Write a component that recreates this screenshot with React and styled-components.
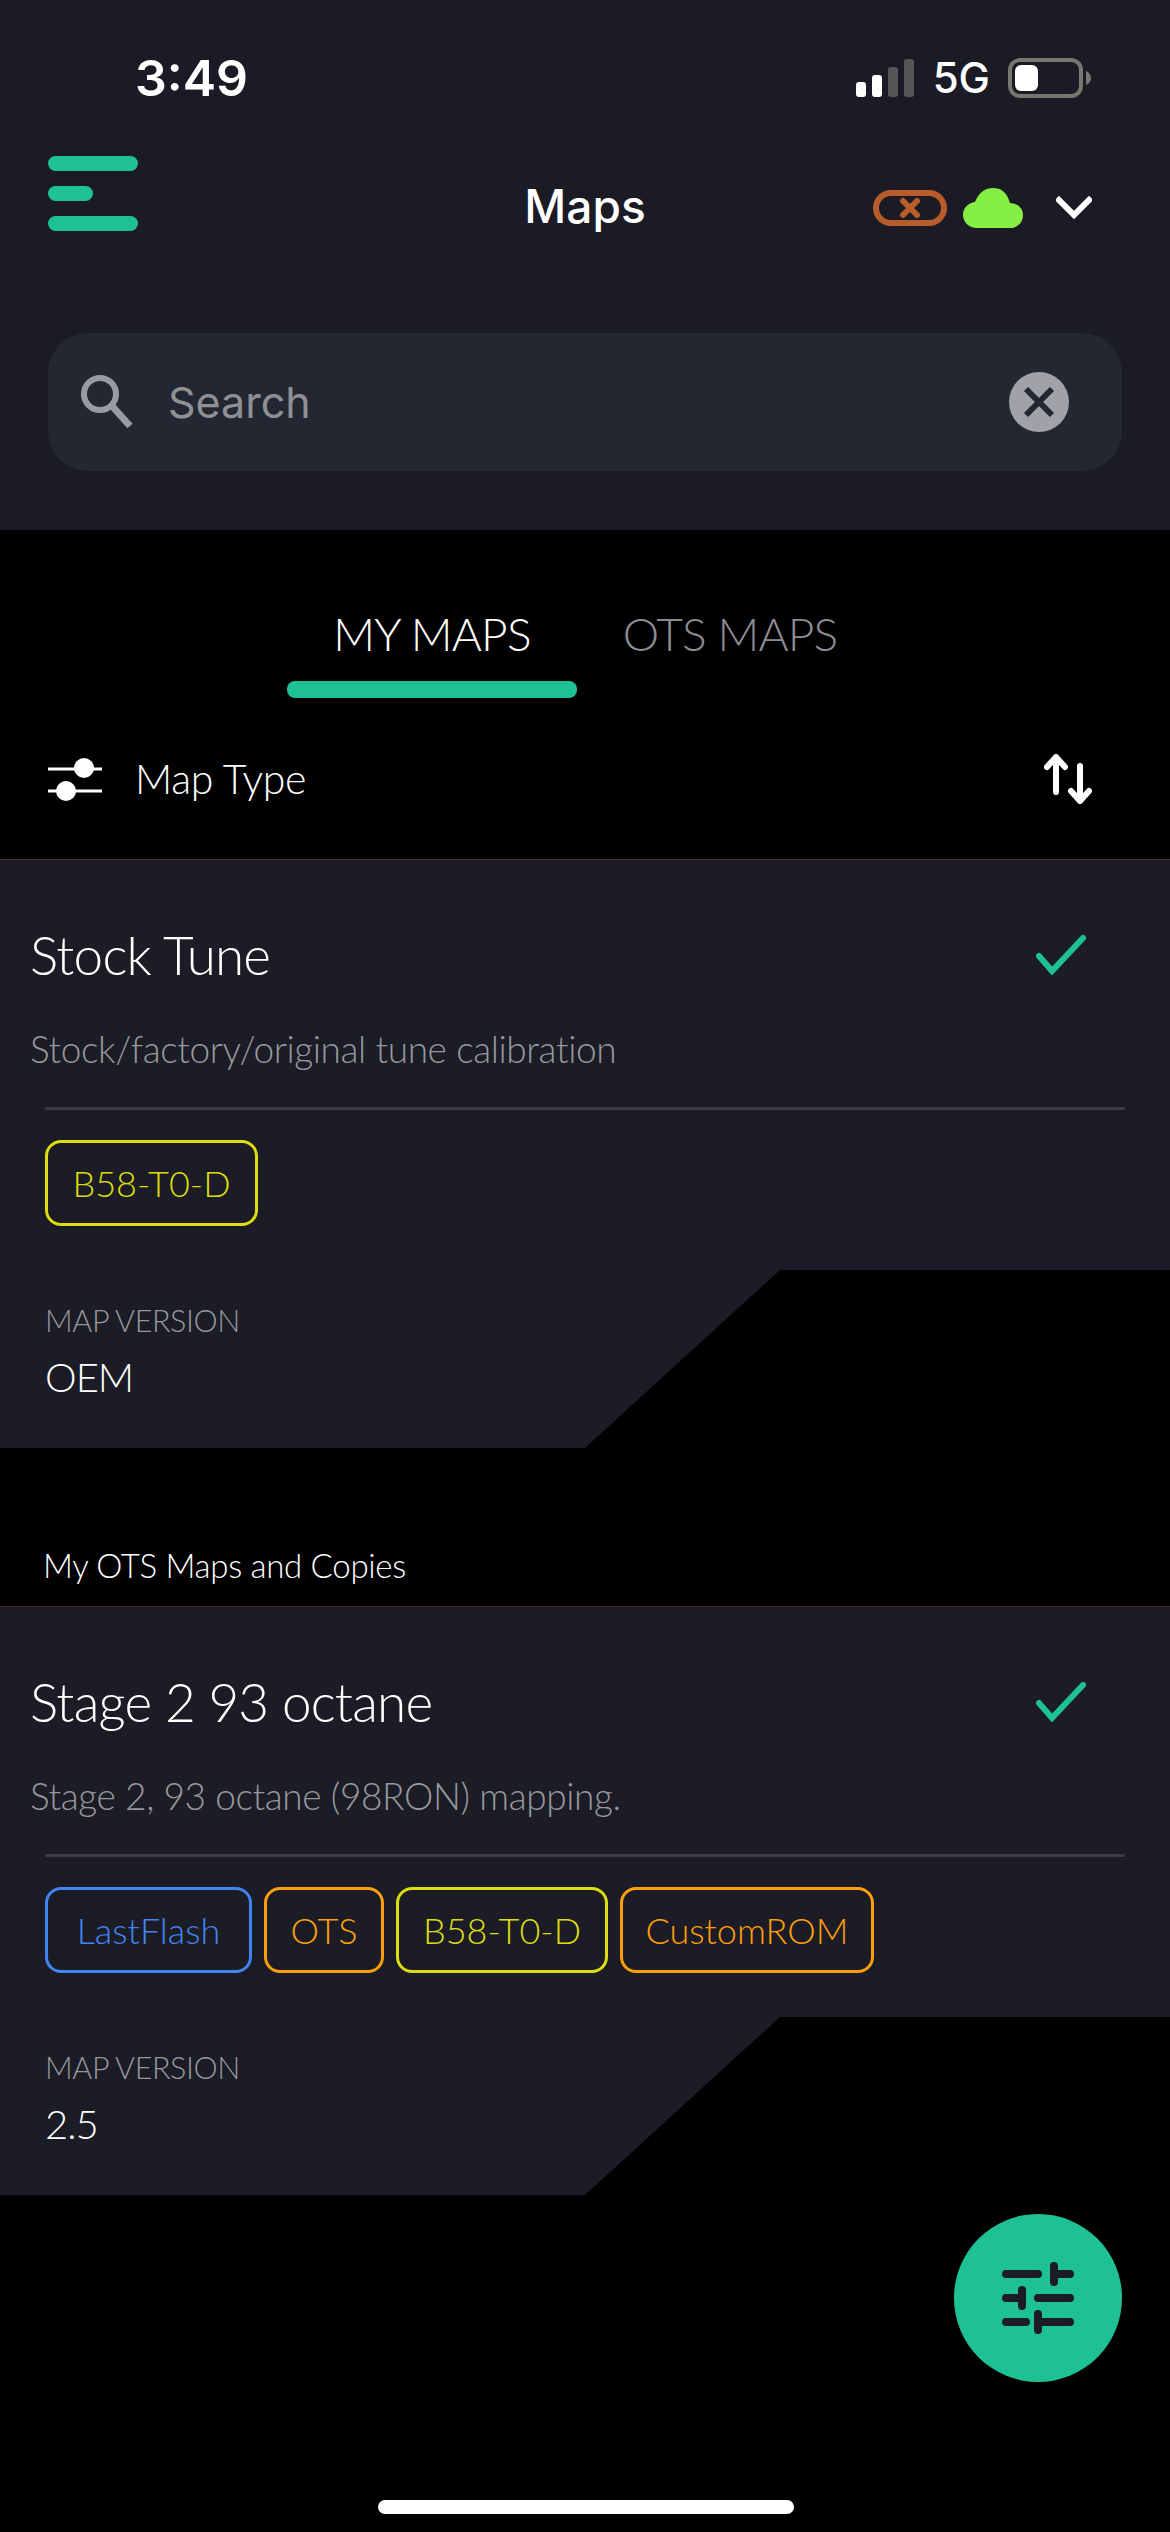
import React from 'react';
import styled, { createGlobalStyle } from 'styled-components';

const GlobalStyle = createGlobalStyle`
  html, body {
    margin: 0;
    padding: 0;
    background: #000;
  }
  body {
    font-family: "Lato", "Liberation Sans", sans-serif;
  }
`;

const Screen = styled.div`
  position: relative;
  width: 1170px;
  height: 2532px;
  overflow: hidden;
  background: #000;
`;

const Header = styled.header`
  height: 530px;
  background: #1a1b25;
  display: flex;
  flex-direction: column;
`;

const StatusBar = styled.div`
  height: 110px;
  padding: 46px 79px 0 135px;
  box-sizing: border-box;
  display: flex;
  align-items: center;
  justify-content: space-between;
  color: #fff;
  font-family: "Inter", "Liberation Sans", sans-serif;
`;
const Time = styled.span`
  font-size: 50px;
  font-weight: 600;
  line-height: 60px;
`;
const StatusIcons = styled.div`
  display: flex;
  align-items: center;
`;
const Network = styled.span`
  font-size: 42px;
  font-weight: 500;
  line-height: 50px;
  margin: 0 18px 0 19px;
`;

const NavBar = styled.div`
  display: grid;
  grid-template-columns: 1fr auto 1fr;
  align-items: start;
  height: 223px;
  padding: 46px 48px 0;
  box-sizing: border-box;
`;
const Menu = styled.div`
  display: flex;
  flex-direction: column;
  gap: 15px;
`;
const MenuBar = styled.span`
  display: block;
  width: ${(p) => p.$w}px;
  height: 15px;
  border-radius: 8px;
  background: #1ec193;
`;
const Title = styled.h1`
  margin: 22px 0 0;
  font-family: "Inter", "Liberation Sans", sans-serif;
  font-size: 46px;
  font-weight: 500;
  line-height: 56px;
  color: #fff;
`;
const NavIcons = styled.div`
  display: flex;
  justify-content: flex-end;
  align-items: center;
  gap: 16px;
  margin-top: 32px;
  padding-right: 30px;
`;
const ChevronSlot = styled.span`
  display: flex;
  margin-left: 17px;
`;

const SearchBox = styled.div`
  height: 138px;
  margin: 0 48px;
  padding: 0 53px 0 33px;
  box-sizing: border-box;
  border-radius: 40px;
  background: #232731;
  display: flex;
  align-items: center;
`;
const SearchText = styled.span`
  flex: 1;
  margin-left: 35px;
  font-family: "Inter", "Liberation Sans", sans-serif;
  font-size: 43px;
  line-height: 54px;
  color: #8f9096;
`;

const Tabs = styled.nav`
  height: 168px;
  padding-left: 287px;
  display: flex;
  gap: 8px;
`;
const Tab = styled.div`
  width: 290px;
  height: 168px;
  box-sizing: border-box;
  padding-top: 79px;
  text-align: center;
  font-size: 46px;
  font-weight: 300;
  line-height: 50px;
  letter-spacing: -0.8px;
  color: ${(p) => (p.$active ? '#fff' : '#8c8d92')};
  position: relative;
  &::after {
    content: '';
    display: ${(p) => (p.$active ? 'block' : 'none')};
    position: absolute;
    left: 0;
    right: 0;
    bottom: 0;
    height: 17px;
    border-radius: 8px;
    background: #1ec193;
  }
`;

const FilterRow = styled.div`
  height: 161px;
  padding: 0 78px 0 48px;
  box-sizing: border-box;
  display: flex;
  align-items: center;
`;
const FilterLabel = styled.span`
  flex: 1;
  margin-left: 33px;
  font-size: 41px;
  font-weight: 300;
  line-height: 50px;
  letter-spacing: -0.3px;
  color: #fff;
`;

const Card = styled.section`
  background: #1b1c25;
  border-top: 1px solid #4a2c2e;
  padding: 67px 0 46px;
  clip-path: polygon(0 0, 100% 0, 100% 411px, 780px 411px, 585px 100%, 0 100%);
`;
const CardHead = styled.div`
  display: flex;
  align-items: center;
  justify-content: space-between;
  padding: 0 84px 0 30px;
`;
const CardTitle = styled.h2`
  margin: 0;
  font-size: 53px;
  font-weight: 300;
  line-height: 56px;
  letter-spacing: -0.8px;
  color: #fff;
`;
const Description = styled.p`
  margin: 44px 0 0 30px;
  font-size: 37px;
  font-weight: 300;
  line-height: 44px;
  letter-spacing: -0.4px;
  color: #97989d;
`;
const Divider = styled.hr`
  margin: 36px 45px 0;
  height: 3px;
  border: 0;
  border-radius: 2px;
  background: #3b3c43;
`;
const Chips = styled.div`
  display: flex;
  gap: 12px;
  margin: 30px 0 0 45px;
`;
const Chip = styled.span`
  width: ${(p) => p.$w}px;
  height: 86px;
  box-sizing: border-box;
  border: 3px solid ${(p) => p.$color};
  border-radius: 16px;
  display: flex;
  align-items: center;
  justify-content: center;
  font-size: 36px;
  font-weight: 300;
  letter-spacing: 0;
  color: ${(p) => p.$color};
`;
const VersionLabel = styled.div`
  margin: 76px 0 0 45px;
  font-size: 30.5px;
  font-weight: 300;
  line-height: 36px;
  letter-spacing: -0.4px;
  color: #97989d;
`;
const VersionValue = styled.div`
  margin: 14px 0 0 45px;
  font-size: 40px;
  font-weight: 300;
  line-height: 50px;
  letter-spacing: -1px;
  color: #fff;
`;

const SectionLabel = styled.div`
  height: 158px;
  padding: 0 0 19px 43px;
  box-sizing: border-box;
  display: flex;
  align-items: flex-end;
  font-size: 33px;
  font-weight: 300;
  line-height: 44px;
  letter-spacing: -0.3px;
  color: #fff;
`;

const Fab = styled.button`
  position: absolute;
  left: 954px;
  top: 2214px;
  width: 168px;
  height: 168px;
  padding: 0;
  border: 0;
  border-radius: 50%;
  background: #1ec193;
  display: flex;
  align-items: center;
  justify-content: center;
`;
const HomeIndicator = styled.div`
  position: absolute;
  left: 378px;
  top: 2500px;
  width: 416px;
  height: 14px;
  border-radius: 7px;
  background: #fff;
`;

const Signal = () => (
  <svg width="58" height="38" viewBox="0 0 58 38">
    <rect x="0" y="23" width="10" height="15" rx="3" fill="#fff" />
    <rect x="16" y="16" width="10" height="22" rx="3" fill="#fff" />
    <rect x="32" y="8" width="10" height="30" rx="3" fill="#555655" />
    <rect x="48" y="0" width="10" height="38" rx="3" fill="#555655" />
  </svg>
);

const Battery = () => (
  <svg width="83" height="40" viewBox="0 0 83 40">
    <rect x="2" y="2" width="71" height="36" rx="10" fill="none" stroke="#77766f" strokeWidth="4" />
    <rect x="7" y="7" width="23" height="26" rx="6" fill="#fff" />
    <path d="M78 13c3 1 5 4 5 7s-2 6-5 7z" fill="#77766f" />
  </svg>
);

const Disconnected = () => (
  <svg width="74" height="36" viewBox="0 0 74 36">
    <rect x="3" y="3" width="68" height="30" rx="15" fill="none" stroke="#b85c2b" strokeWidth="6" />
    <path d="M30 11l14 14M44 11L30 25" fill="none" stroke="#b85c2b" strokeWidth="6" strokeLinecap="round" />
  </svg>
);

const Cloud = () => (
  <svg width="60" height="40" viewBox="0 0 60 40">
    <path
      d="M14 40C6 40 0 34 0 27c0-7 5-12 12-13C15 6 21 0 30 0c8 0 14 4 17 15 7 0 13 5 13 12 0 8-6 13-13 13z"
      fill="#86ef43"
    />
  </svg>
);

const Chevron = () => (
  <svg width="36" height="24" viewBox="0 0 36 24">
    <path d="M3 4l15 15L33 4" fill="none" stroke="#fff" strokeWidth="6" strokeLinecap="square" />
  </svg>
);

const SearchIcon = () => (
  <svg width="52" height="54" viewBox="0 0 52 54">
    <circle cx="19" cy="19" r="16" fill="none" stroke="#9a9ba0" strokeWidth="6" />
    <path d="M31 31l18 20" fill="none" stroke="#9a9ba0" strokeWidth="7" />
  </svg>
);

const ClearIcon = () => (
  <svg width="60" height="60" viewBox="0 0 60 60">
    <circle cx="30" cy="30" r="30" fill="#a1a2a8" />
    <path d="M17 17l26 26M43 17L17 43" fill="none" stroke="#232731" strokeWidth="6" />
  </svg>
);

const FilterIcon = () => (
  <svg width="54" height="46" viewBox="0 0 54 46">
    <path d="M0 13h54M0 35h54" stroke="#fff" strokeWidth="3" />
    <circle cx="36" cy="12" r="10" fill="#fff" />
    <circle cx="18" cy="35" r="10" fill="#fff" />
  </svg>
);

const SortIcon = () => (
  <svg width="48" height="50" viewBox="0 0 48 50">
    <path
      d="M12 38V4M3 13l9-10 9 10M36 12v35M27 37l9 10 9-10"
      fill="none"
      stroke="#fff"
      strokeWidth="6"
      strokeLinecap="round"
      strokeLinejoin="round"
    />
  </svg>
);

const CheckIcon = () => (
  <svg width="50" height="40" viewBox="0 0 50 40">
    <path d="M3 21l13 15L47 3" fill="none" stroke="#1ec193" strokeWidth="6" strokeLinecap="round" />
  </svg>
);

const SlidersIcon = () => (
  <svg width="72" height="72" viewBox="0 0 72 72">
    <path
      d="M4 12h32M52 4v16M52 12h16M4 36h16M20 28v16M36 36h32M4 60h20M36 52v16M36 60h32"
      fill="none"
      stroke="#1a1b25"
      strokeWidth="8"
      strokeLinecap="round"
    />
  </svg>
);

const YELLOW = '#dddd10';
const ORANGE = '#ff9f0a';
const BLUE = '#4285f0';

const maps = [
  {
    title: 'Stock Tune',
    description: 'Stock/factory/original tune calibration',
    chips: [{ label: 'B58-T0-D', color: YELLOW, width: 213 }],
    version: 'OEM',
  },
  {
    title: 'Stage 2 93 octane',
    description: 'Stage 2, 93 octane (98RON) mapping.',
    chips: [
      { label: 'LastFlash', color: BLUE, width: 207 },
      { label: 'OTS', color: ORANGE, width: 120 },
      { label: 'B58-T0-D', color: YELLOW, width: 212 },
      { label: 'CustomROM', color: ORANGE, width: 254 },
    ],
    version: '2.5',
  },
];

const MapCard = ({ map }) => (
  <Card>
    <CardHead>
      <CardTitle>{map.title}</CardTitle>
      <CheckIcon />
    </CardHead>
    <Description>{map.description}</Description>
    <Divider />
    <Chips>
      {map.chips.map((chip) => (
        <Chip key={chip.label} $color={chip.color} $w={chip.width}>
          {chip.label}
        </Chip>
      ))}
    </Chips>
    <VersionLabel>MAP VERSION</VersionLabel>
    <VersionValue>{map.version}</VersionValue>
  </Card>
);

export default function App() {
  return (
    <Screen>
      <GlobalStyle />
      <Header>
        <StatusBar>
          <Time>3:49</Time>
          <StatusIcons>
            <Signal />
            <Network>5G</Network>
            <Battery />
          </StatusIcons>
        </StatusBar>
        <NavBar>
          <Menu>
            <MenuBar $w={90} />
            <MenuBar $w={45} />
            <MenuBar $w={90} />
          </Menu>
          <Title>Maps</Title>
          <NavIcons>
            <Disconnected />
            <Cloud />
            <ChevronSlot>
              <Chevron />
            </ChevronSlot>
          </NavIcons>
        </NavBar>
        <SearchBox>
          <SearchIcon />
          <SearchText>Search</SearchText>
          <ClearIcon />
        </SearchBox>
      </Header>
      <Tabs>
        <Tab $active>MY MAPS</Tab>
        <Tab>OTS MAPS</Tab>
      </Tabs>
      <FilterRow>
        <FilterIcon />
        <FilterLabel>Map Type</FilterLabel>
        <SortIcon />
      </FilterRow>
      <MapCard map={maps[0]} />
      <SectionLabel>My OTS Maps and Copies</SectionLabel>
      <MapCard map={maps[1]} />
      <Fab>
        <SlidersIcon />
      </Fab>
      <HomeIndicator />
    </Screen>
  );
}
